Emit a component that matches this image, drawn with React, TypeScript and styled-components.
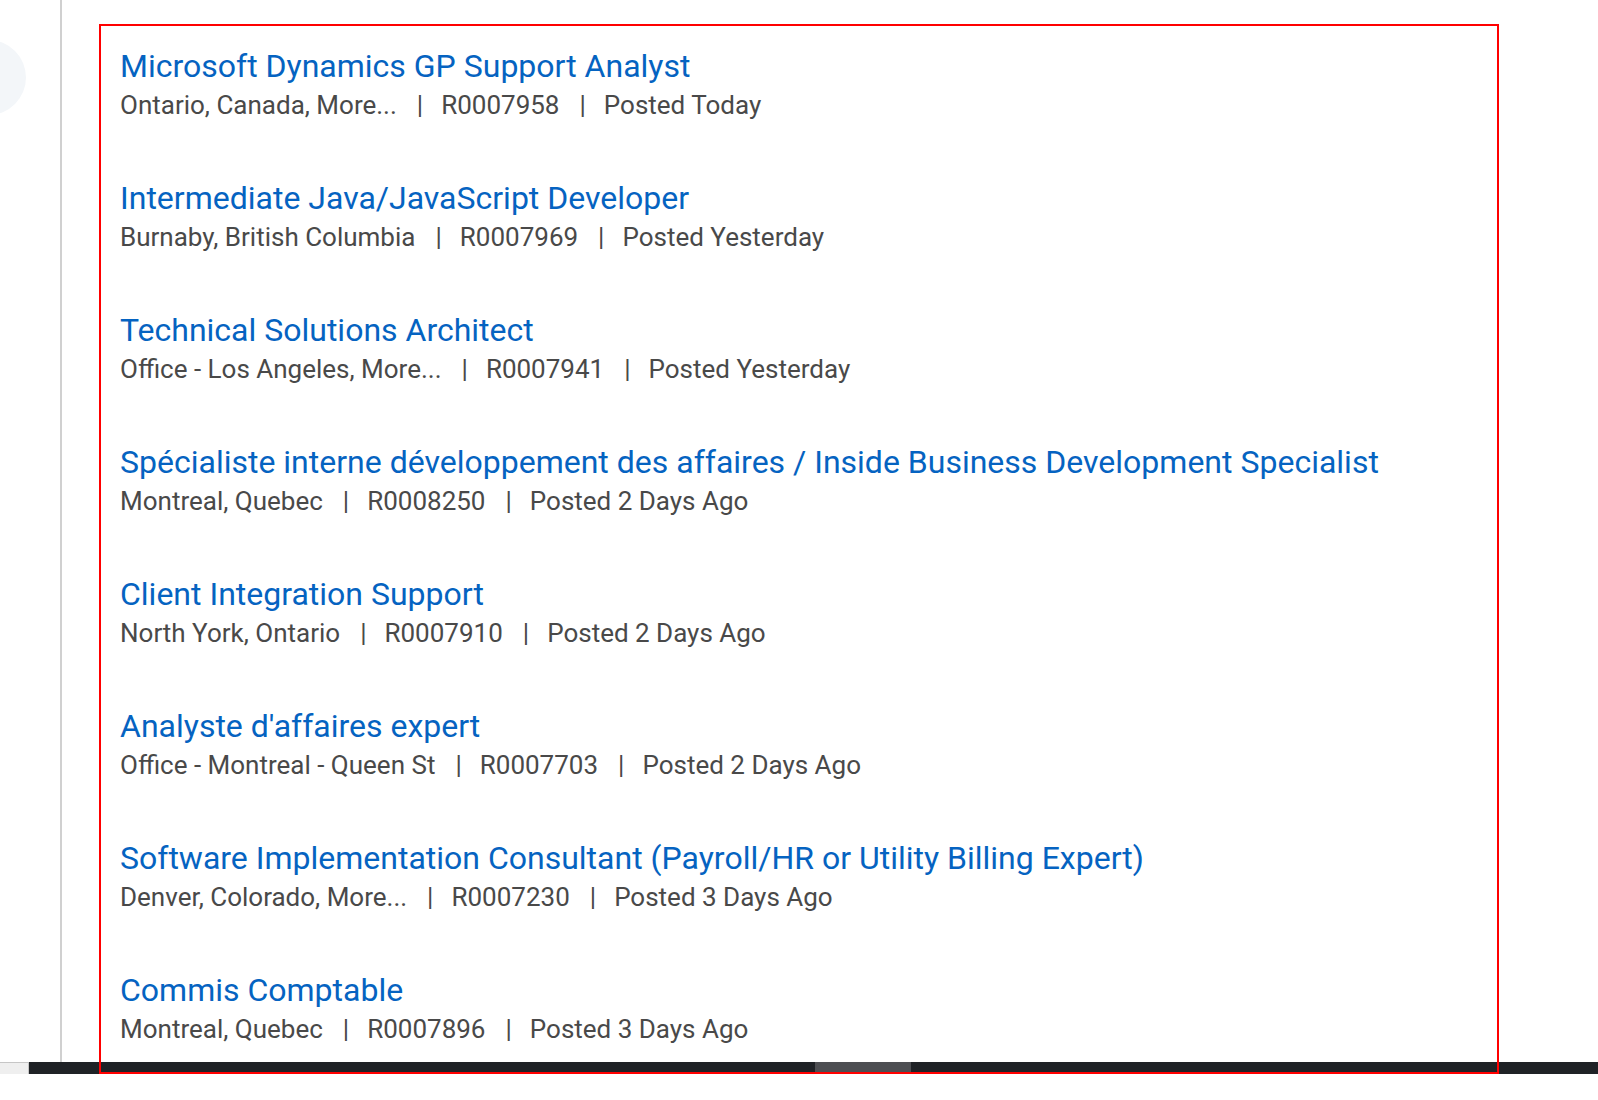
import React from "react";
import styled, { createGlobalStyle } from "styled-components";

const GlobalStyle = createGlobalStyle`
  html, body {
    margin: 0;
    padding: 0;
    background: #ffffff;
    font-family: Roboto, "Noto Sans", Arial, sans-serif;
  }
`;

type Job = { title: string; location: string; id: string; posted: string };

const jobs: Job[] = [
  { title: "Microsoft Dynamics GP Support Analyst", location: "Ontario, Canada, More...", id: "R0007958", posted: "Posted Today" },
  { title: "Intermediate Java/JavaScript Developer", location: "Burnaby, British Columbia", id: "R0007969", posted: "Posted Yesterday" },
  { title: "Technical Solutions Architect", location: "Office - Los Angeles, More...", id: "R0007941", posted: "Posted Yesterday" },
  { title: "Spécialiste interne développement des affaires / Inside Business Development Specialist", location: "Montreal, Quebec", id: "R0008250", posted: "Posted 2 Days Ago" },
  { title: "Client Integration Support", location: "North York, Ontario", id: "R0007910", posted: "Posted 2 Days Ago" },
  { title: "Analyste d'affaires expert", location: "Office - Montreal - Queen St", id: "R0007703", posted: "Posted 2 Days Ago" },
  { title: "Software Implementation Consultant (Payroll/HR or Utility Billing Expert)", location: "Denver, Colorado, More...", id: "R0007230", posted: "Posted 3 Days Ago" },
  { title: "Commis Comptable", location: "Montreal, Quebec", id: "R0007896", posted: "Posted 3 Days Ago" },
];

const Page = styled.div`
  width: 1598px;
  height: 1100px;
  display: flex;
  flex-direction: column;
  background: #ffffff;
  overflow: hidden;
`;

const Viewport = styled.div`
  height: 1062px;
  display: flex;
  flex-direction: row;
`;

const Sidebar = styled.aside`
  width: 60px;
  flex: none;
  border-right: 2px solid #d0d0d0;
  overflow: hidden;
  padding-top: 40px;
  box-sizing: content-box;
`;

const Avatar = styled.div`
  width: 75px;
  height: 75px;
  border-radius: 50%;
  background: #f3f6f9;
  margin-left: -49px;
`;

const Main = styled.main`
  flex: 1;
  padding: 24px 0 0 37px;
`;

const JobList = styled.ul`
  position: relative;
  z-index: 1;
  box-sizing: border-box;
  width: 1400px;
  height: 1050px;
  margin: 0;
  list-style: none;
  border: 2px solid #ff0000;
  padding: 21px 0 0 19px;
  display: flex;
  flex-direction: column;
  gap: 59px;
`;

const JobItem = styled.li`
  display: flex;
  flex-direction: column;
  gap: 5px;
`;

const JobTitle = styled.a`
  font-size: 32px;
  line-height: 38px;
  color: #0563c1;
  text-decoration: none;
  white-space: nowrap;
`;

const Meta = styled.div`
  font-size: 26px;
  line-height: 30px;
  color: #494949;
  white-space: nowrap;
  display: flex;
  align-items: baseline;
`;

const Sep = styled.span`
  padding: 0 18px 0 20px;
`;

const ScrollBar = styled.div`
  height: 12px;
  display: flex;
  flex: none;
`;

const Corner = styled.div`
  width: 29px;
  box-sizing: border-box;
  background: #efefef;
  border-top: 1px solid #c6c6c6;
  border-right: 1px solid #c6c6c6;
`;

const Track = styled.div`
  flex: 1;
  background: #1f2226;
  display: flex;
  padding-left: 786px;
`;

const Thumb = styled.div`
  width: 96px;
  background: #4d4e52;
`;

export default function App() {
  return (
    <Page>
      <GlobalStyle />
      <Viewport>
        <Sidebar>
          <Avatar />
        </Sidebar>
        <Main>
          <JobList>
            {jobs.map((j) => (
              <JobItem key={j.id}>
                <JobTitle href="#">{j.title}</JobTitle>
                <Meta>
                  <span>{j.location}</span>
                  <Sep>|</Sep>
                  <span>{j.id}</span>
                  <Sep>|</Sep>
                  <span>{j.posted}</span>
                </Meta>
              </JobItem>
            ))}
          </JobList>
        </Main>
      </Viewport>
      <ScrollBar>
        <Corner />
        <Track>
          <Thumb />
        </Track>
      </ScrollBar>
    </Page>
  );
}
